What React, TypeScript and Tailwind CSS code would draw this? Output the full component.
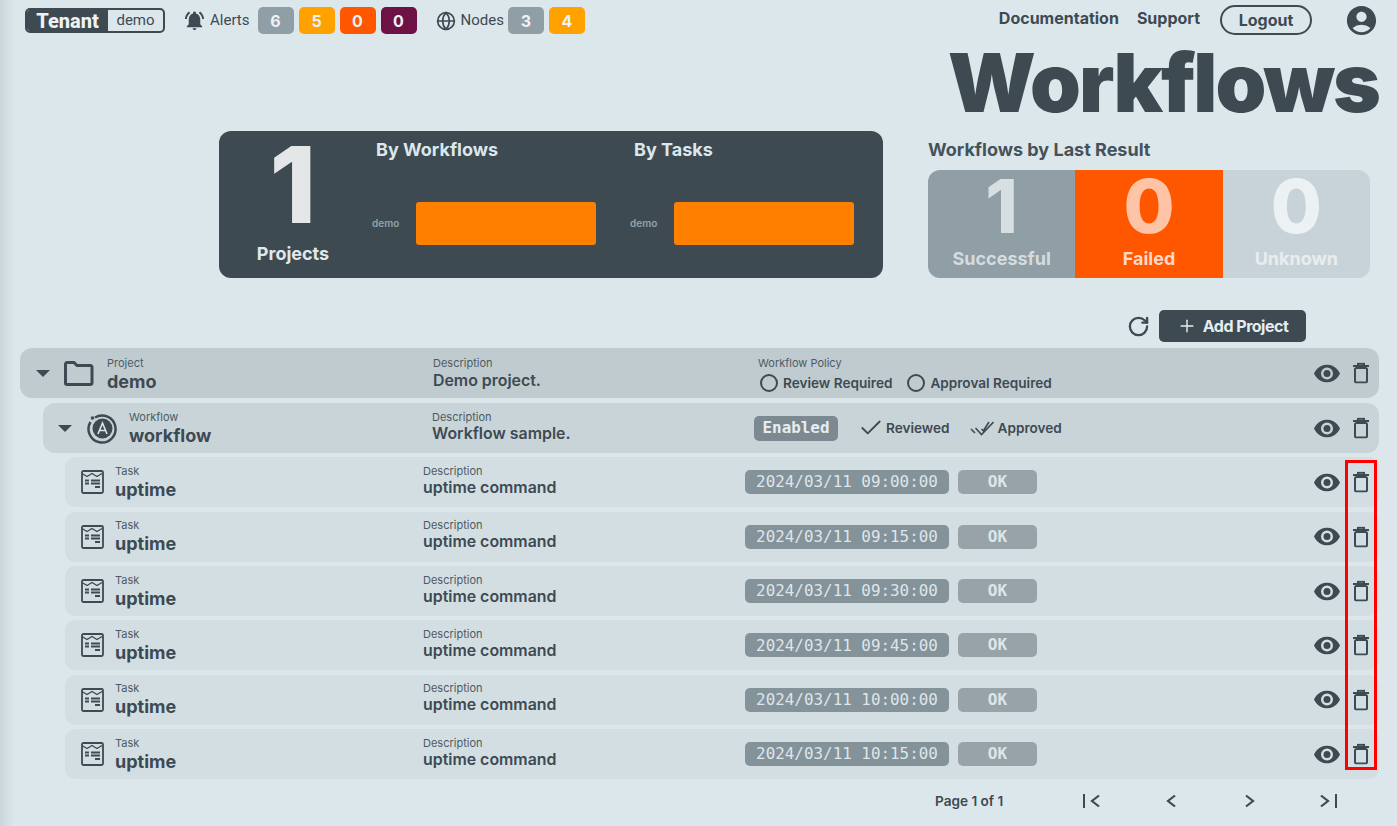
import { Globe, RotateCw, Plus, Check } from "lucide-react";
import { MdNotificationsActive, MdAccountCircle } from "react-icons/md";

const rows = ["09:00:00", "09:15:00", "09:30:00", "09:45:00", "10:00:00", "10:15:00"];
const inter = "font-['Inter',sans-serif]";
const mono = "font-['DejaVu_Sans_Mono',monospace]";
const roboto = "font-['Roboto',sans-serif]";

function Trash() {
  return (
    <svg width="16" height="21" viewBox="0 0 16 21" fill="none" stroke="#3d4a52" strokeWidth="2">
      <path d="M0 3.500h16M5 3V1.200h6V3" />
      <rect x="2" y="5.500" width="12" height="14.500" rx="1.500" />
    </svg>
  );
}

function EyeIcon() {
  return (
    <svg width="26" height="18" viewBox="0 0 26 18">
      <path fill="#3d4a52" fillRule="evenodd" d="M13 0C7.500 0 2.600 3.500 0 9c2.600 5.500 7.500 9 13 9s10.400-3.500 13-9c-2.600-5.500-7.500-9-13-9zm0 15a6 6 0 1 1 0-12 6 6 0 0 1 0 12z" />
      <circle cx="13" cy="9" r="3.500" fill="#3d4a52" />
    </svg>
  );
}

function Actions() {
  return (
    <div className="flex items-center gap-[13px] absolute right-[10px] top-1/2 -translate-y-1/2">
      <EyeIcon />
      <Trash />
    </div>
  );
}

function Caret() {
  return <div className="w-0 h-0 border-x-[7px] border-x-transparent border-t-[7px] border-t-[#3d4a52]" />;
}

function Chevron({ flip = false }: { flip?: boolean }) {
  return (
    <svg width="10" height="14" viewBox="0 0 10 14" fill="none" stroke="#3d4a52" strokeWidth="2.200" className={flip ? "rotate-180" : ""}>
      <path d="M9 1.500L2 7l7 5.500" />
    </svg>
  );
}

function Labelled({ label, value }: { label: string; value: string }) {
  return (
    <div className="flex flex-col">
      <span className="text-[11px] leading-[14px] text-[#4d5a63]">{label}</span>
      <span className="mt-[1px] text-[18px] leading-[22px] font-bold text-[#3d4a52]">{value}</span>
    </div>
  );
}

function Described({ value, lead }: { value: string; lead: string }) {
  return (
    <>
      <span className="block text-[11px] leading-[14px] text-[#4d5a63]">Description</span>
      <span className={`block text-[15.900px] font-semibold text-[#3d4a52] ${lead}`}>{value}</span>
    </>
  );
}

function Badge({ n, color }: { n: string; color: string }) {
  return (
    <span className={`flex h-[27px] w-[36px] items-center justify-center rounded-[5px] text-[16px] font-bold text-[#eef2f4] ${inter} ${color}`}>{n}</span>
  );
}

function TaskIcon() {
  return (
    <svg width="23" height="24" viewBox="0 0 23 24" fill="none" stroke="#3d4a52" strokeWidth="1.800">
      <rect x="1" y="1" width="21" height="22" rx="1.500" />
      <path strokeWidth="1.300" d="M1 3.500l5 3 5-3 5 3 5-3" />
      <path d="M4 10.500h4M10 10.500h9M4 13.500h4M10 13.500h9M14 17h5" />
    </svg>
  );
}

function TaskRow({ time }: { time: string }) {
  return (
    <div className="relative ml-[65px] flex h-[50px] items-center rounded-[10px] bg-[#d3dee3]">
      <div className="ml-[16px] w-[34px]"><TaskIcon /></div>
      <div className="w-[308px]"><Labelled label="Task" value="uptime" /></div>
      <div className="w-[322px] pb-[3px]"><Described value="uptime command" lead="leading-[20px]" /></div>
      <span className={`flex h-[24px] w-[204px] items-center justify-center rounded-[5px] bg-[#84929a] text-[15.900px] text-[#dde6ea] ${mono}`}>2024/03/11 {time}</span>
      <span className={`ml-[9px] flex h-[24px] w-[79px] items-center justify-center rounded-[5px] bg-[#97a3a9] text-[16px] font-bold text-[#dde6ea] ${mono}`}>OK</span>
      <Actions />
    </div>
  );
}

export default function App() {
  return (
    <main className={`relative h-[826px] w-[1397px] overflow-hidden bg-[#dce7ec] text-[#3d4a52] ${inter}`}>
      <header className="flex h-[41px] items-center pl-[25px] pr-[18px]">
        <div className={`flex h-[25px] items-stretch overflow-hidden rounded-[5px] border-2 border-[#3d4a52] ${roboto}`}>
          <span className="flex w-[81px] items-center justify-center bg-[#3d4a52] text-[20px] font-extrabold text-[#eef2f4]">Tenant</span>
          <span className="flex w-[55px] items-center justify-center text-[15px]">demo</span>
        </div>
        <MdNotificationsActive className="ml-[18px]" size={23} />
        <span className={`ml-[4px] text-[15px] ${roboto}`}>Alerts</span>
        <div className="ml-[8px] flex gap-[5px]">
          <Badge n="6" color="bg-[#909ea6]" />
          <Badge n="5" color="bg-[#ffa200]" />
          <Badge n="0" color="bg-[#ff5700]" />
          <Badge n="0" color="bg-[#6e1144]" />
        </div>
        <Globe className="ml-[19px]" size={20} strokeWidth={2} />
        <span className={`ml-[5px] text-[15px] ${roboto}`}>Nodes</span>
        <div className="ml-[4px] flex gap-[5px]">
          <Badge n="3" color="bg-[#909ea6]" />
          <Badge n="4" color="bg-[#ffa200]" />
        </div>
        <nav className="ml-auto flex items-center">
          <a className="mb-[5px] text-[16px] font-bold">Documentation</a>
          <a className="mb-[5px] ml-[18px] text-[16px] font-bold">Support</a>
          <button className="mb-[2px] ml-[20px] h-[30px] w-[92px] rounded-full border-2 border-[#3d4a52] text-[16px] font-bold">Logout</button>
          <MdAccountCircle className="ml-[32px]" size={35} />
        </nav>
      </header>

      <h1 className="mt-[-3px] h-[93px] pr-[18px] text-right text-[81.500px] leading-[90px] font-black tracking-[-2px]">Workflows</h1>

      <section className="flex h-[147px]">
        <div className="ml-[219px] flex h-[147px] w-[664px] rounded-[12px] bg-[#3d4a52]">
          <div className="flex w-[148px] flex-col items-center">
            <span className="h-[108px] text-[106px] leading-[108px] font-extrabold text-[#e4e6e8]">1</span>
            <span className="mt-[3px] text-[18px] leading-[24px] font-bold text-[#e0e8ec]">Projects</span>
          </div>
          <div className="w-[258px] pt-[6px]">
            <h3 className="ml-[9px] text-[18px] leading-[25px] font-bold text-[#dce7ec]">By Workflows</h3>
            <div className="mt-[40px] flex items-center">
              <span className="ml-[5px] w-[44px] text-[10px] font-semibold text-[#8fa5a8]">demo</span>
              <div className="h-[43px] w-[180px] rounded-[3px] bg-[#ff8000]" />
            </div>
          </div>
          <div className="w-[258px] pt-[6px]">
            <h3 className="ml-[9px] text-[18px] leading-[25px] font-bold text-[#dce7ec]">By Tasks</h3>
            <div className="mt-[40px] flex items-center">
              <span className="ml-[5px] w-[44px] text-[10px] font-semibold text-[#8fa5a8]">demo</span>
              <div className="h-[43px] w-[180px] rounded-[3px] bg-[#ff8000]" />
            </div>
          </div>
        </div>
        <div className="ml-[45px] w-[442px]">
          <h3 className="mt-[6px] h-[33px] text-[18px] leading-[25px] font-bold text-[#46525a]">Workflows by Last Result</h3>
          <div className="flex h-[108px] overflow-hidden rounded-[12px]">
            {[
              ["1", "Successful", "bg-[#909ea6]", "text-[#d8dfe2]", "text-[#d5dcdf]"],
              ["0", "Failed", "bg-[#ff5700]", "text-[#ffc4a6]", "text-[#ffd9c5]"],
              ["0", "Unknown", "bg-[#c8d3d9]", "text-[#ecf1f3]", "text-[#e8edf0]"],
            ].map(([n, l, c, nc, lc]) => (
              <div key={l} className={`flex flex-1 flex-col items-center ${c}`}>
                <span className={`h-[72px] text-[74px] leading-[72px] font-extrabold ${nc}`}>{n}</span>
                <span className={`mt-[5px] text-[18px] leading-[24px] font-bold ${lc}`}>{l}</span>
              </div>
            ))}
          </div>
        </div>
      </section>

      <div className="mt-[32px] flex h-[32px] items-center justify-end pr-[91px]">
        <RotateCw size={23} strokeWidth={2.400} />
        <button className="ml-[9px] flex h-[32px] w-[147px] items-center justify-center gap-[6px] rounded-[5px] bg-[#3d4a52] pb-[1px] text-[16px] font-bold tracking-[-0.500px] text-[#e6edf0]">
          <Plus size={20} strokeWidth={1.700} /> Add Project
        </button>
      </div>

      <div className="mt-[6px] flex flex-col pr-[18px] pl-[20px]">
        <div className="relative flex h-[50px] items-center rounded-[12px] bg-[#c0cbd0]">
          <div className="ml-[16px] w-[28px]"><Caret /></div>
          <svg width="30" height="25" viewBox="0 0 30 25" fill="none" stroke="#3d4a52" strokeWidth="3">
            <path d="M1.500 22V3a1.500 1.500 0 0 1 1.500-1.500h7l3 3h13.500a1.500 1.500 0 0 1 1.500 1.500v16a1.500 1.500 0 0 1-1.500 1.500H3A1.500 1.500 0 0 1 1.500 22z" />
          </svg>
          <div className="ml-[13px] w-[326px] pt-[2px]"><Labelled label="Project" value="demo" /></div>
          <div className="w-[325px] pt-[2px]"><Described value="Demo project." lead="leading-[22px]" /></div>
          <div className="pt-[2px]">
            <span className="block text-[11px] leading-[14px] text-[#4d5a63]">Workflow Policy</span>
            <div className="mt-[3px] flex items-center text-[13.600px] leading-[20px] font-semibold">
              <span className="ml-[2px] h-[18px] w-[18px] rounded-full border-2 border-[#3d4a52]" />
              <span className="ml-[5px]">Review Required</span>
              <span className="ml-[15px] h-[18px] w-[18px] rounded-full border-2 border-[#3d4a52]" />
              <span className="ml-[5px]">Approval Required</span>
            </div>
          </div>
          <Actions />
        </div>

        <div className="relative mt-[5px] ml-[23px] flex h-[50px] items-center rounded-[12px] bg-[#c9d4d9]">
          <div className="ml-[15px] w-[29px]"><Caret /></div>
          <svg width="31" height="31" viewBox="0 0 31 31" fill="none" stroke="#3d4a52">
            <path strokeWidth="2.500" d="M8 4.500A13.500 13.500 0 1 1 3.500 9" />
            <circle cx="5.500" cy="5" r="1.800" fill="#3d4a52" stroke="none" />
            <circle cx="15.500" cy="15.500" r="10" fill="#3d4a52" stroke="none" />
            <path stroke="#dce7ec" strokeWidth="1.600" d="M11 21l4.500-11 4.500 11M12.800 17.500h5.400" />
          </svg>
          <div className="ml-[11px] w-[303px]"><Labelled label="Workflow" value="workflow" /></div>
          <div className="w-[322px] pb-[4px]"><Described value="Workflow sample." lead="leading-[19px]" /></div>
          <span className={`flex h-[25px] w-[84px] items-center justify-center rounded-[5px] bg-[#7d8990] text-[15.900px] font-bold text-[#e6edf0] ${mono}`}>Enabled</span>
          <div className="ml-[20px] flex items-center text-[13.600px] font-semibold">
            <Check size={26} strokeWidth={1.700} />
            <span className="ml-[2px]">Reviewed</span>
            <svg className="ml-[20px]" width="24" height="15" viewBox="0 0 24 15" fill="none" stroke="#3d4a52" strokeWidth="1.600">
              <path d="M1 8l4 4M5.500 7l6 6.500L23.500 1M11.500 8l1.500 1.500M13 10.500L19 1" />
            </svg>
            <span className="ml-[4px]">Approved</span>
          </div>
          <Actions />
        </div>

        <div className="mt-[4.300px] flex flex-col gap-[4.400px]">
          {rows.map((t) => <div key={t} className="-ml-[20px]"><TaskRow time={t} /></div>)}
        </div>

        <div className="mt-[9px] flex h-[26px] items-center">
          <span className="ml-[915px] w-[69px] whitespace-nowrap text-[13.600px] font-semibold">Page 1 of 1</span>
          <div className="ml-[79px] flex items-center">
            <span className="flex items-center gap-[5px]"><span className="h-[14px] w-[2px] bg-[#3d4a52]" /><Chevron /></span>
            <span className="ml-[66px]"><Chevron /></span>
            <span className="ml-[69px]"><Chevron flip /></span>
            <span className="ml-[65px] flex items-center gap-[5px]"><Chevron flip /><span className="h-[14px] w-[2px] bg-[#3d4a52]" /></span>
          </div>
        </div>
      </div>

      <div className="absolute left-[1345px] top-[460px] h-[310px] w-[32px] border-[3px] border-[#ff0000]" />
      <div className="absolute inset-y-0 left-0 w-[14px] bg-gradient-to-r from-[#cbd6db] to-[#dce7ec]" />
    </main>
  );
}
